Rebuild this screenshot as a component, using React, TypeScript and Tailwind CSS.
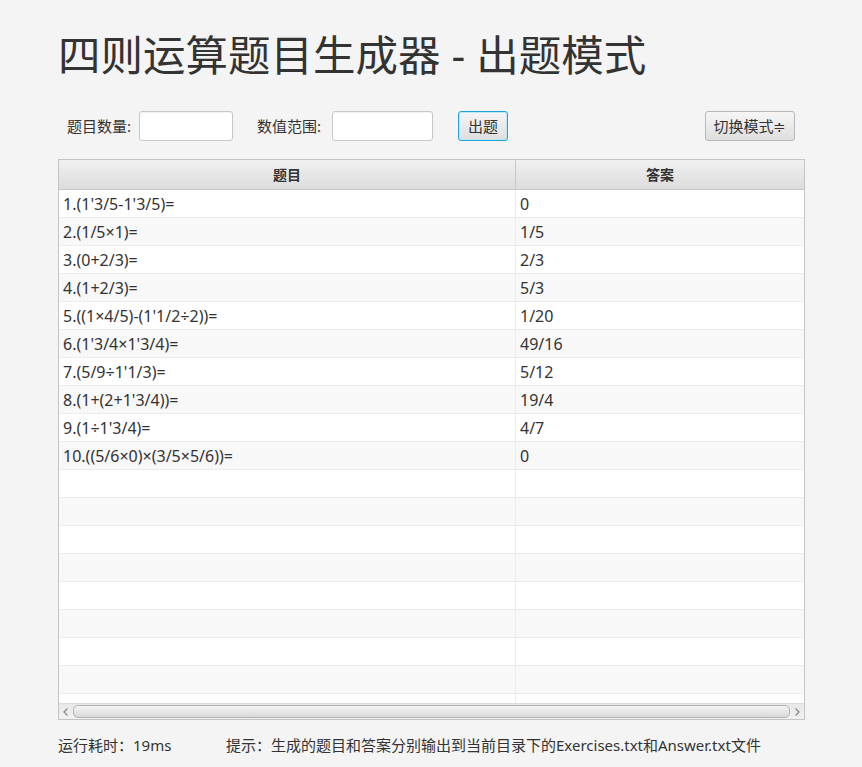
import React from 'react'

const font = { fontFamily: '"Noto Sans", "Noto Sans CJK SC", sans-serif' }

const rows = [
  { q: '1.(1\'3/5-1\'3/5)=', a: '0' },
  { q: '2.(1/5×1)=', a: '1/5' },
  { q: '3.(0+2/3)=', a: '2/3' },
  { q: '4.(1+2/3)=', a: '5/3' },
  { q: '5.((1×4/5)-(1\'1/2÷2))=', a: '1/20' },
  { q: '6.(1\'3/4×1\'3/4)=', a: '49/16' },
  { q: '7.(5/9÷1\'1/3)=', a: '5/12' },
  { q: '8.(1+(2+1\'3/4))=', a: '19/4' },
  { q: '9.(1÷1\'3/4)=', a: '4/7' },
  { q: '10.((5/6×0)×(3/5×5/6))=', a: '0' },
]

const allRows = [...rows, ...Array.from({ length: 9 }, () => ({ q: '', a: '' }))]

export default function App() {
  return (
    <div className="w-[862px] h-[767px] bg-[#f4f4f4] text-[#333] overflow-hidden" style={font}>
      <div className="px-[58px] pt-[26px]">
        {/* Title */}
        <h1 className="text-[42.5px] leading-[58px] text-[#333]">
          四则运算题目生成器 - 出题模式
        </h1>

        {/* Controls */}
        <div className="flex items-center h-[30px] mt-[27px] px-[9px] text-[15px]">
          <span className="w-[72px]">题目数量:</span>
          <input className="w-[94px] h-[30px] bg-white border border-[#c8c8c8] rounded-[3px] shadow-[inset_0_1px_1px_rgba(0,0,0,0.06)]" />
          <span className="ml-[24px] w-[75px]">数值范围:</span>
          <input className="w-[101px] h-[30px] bg-white border border-[#c8c8c8] rounded-[3px] shadow-[inset_0_1px_1px_rgba(0,0,0,0.06)]" />
          <button className="ml-[25px] w-[50px] h-[30px] rounded-[3px] border border-[#1fa3d8] bg-gradient-to-b from-[#f6f6f6] to-[#dedede] shadow-[inset_0_0_0_1px_#bfe6f5] text-[15px]">
            出题
          </button>
          <button className="ml-auto w-[90px] h-[30px] rounded-[3px] border border-[#b8b8b8] bg-gradient-to-b from-[#f6f6f6] to-[#dedede] text-[15px]">
            切换模式≑
          </button>
        </div>

        {/* Table */}
        <div className="mt-[18px] w-[747px] border border-[#c4c4c4] bg-white">
          <div className="grid grid-cols-[457px_1fr] h-[30px] border-b border-[#c8c8c8] bg-gradient-to-b from-[#f1f1f1] to-[#dcdcdc] text-[14px] font-bold">
            <div className="flex items-center justify-center border-r border-[#c8c8c8]">题目</div>
            <div className="flex items-center justify-center">答案</div>
          </div>
          <div className="h-[513px] overflow-hidden">
            {allRows.map((r, i) => (
              <div
                key={i}
                className={`grid grid-cols-[457px_1fr] h-[28px] border-b border-[#ececec] text-[16px] ${
                  i % 2 === 0 ? 'bg-white' : 'bg-[#f8f8f8]'
                }`}
              >
                <div className="flex items-center pl-[4px] border-r border-[#ececec]">{r.q}</div>
                <div className="flex items-center pl-[4px]">{r.a}</div>
              </div>
            ))}
          </div>
          {/* Horizontal scrollbar */}
          <div className="flex items-center h-[16px] bg-gradient-to-b from-[#e8e8e8] to-[#f2f2f2] border-t border-[#dcdcdc]">
            <svg width="14" height="14" viewBox="0 0 14 14" className="shrink-0">
              <path d="M8.5 3.5 L5 7 L8.5 10.5" fill="none" stroke="#8a8a8a" strokeWidth="1.3" />
            </svg>
            <div className="flex-1 h-[13px] rounded-[5px] border border-[#b4b4b4] bg-gradient-to-b from-[#f4f4f4] to-[#d9d9d9]" />
            <svg width="14" height="14" viewBox="0 0 14 14" className="shrink-0">
              <path d="M5.5 3.5 L9 7 L5.5 10.5" fill="none" stroke="#8a8a8a" strokeWidth="1.3" />
            </svg>
          </div>
        </div>

        {/* Footer */}
        <div className="flex items-center mt-[14px] text-[15px]">
          <span className="w-[168px]">运行耗时：19ms</span>
          <span>提示：生成的题目和答案分别输出到当前目录下的Exercises.txt和Answer.txt文件</span>
        </div>
      </div>
    </div>
  )
}
